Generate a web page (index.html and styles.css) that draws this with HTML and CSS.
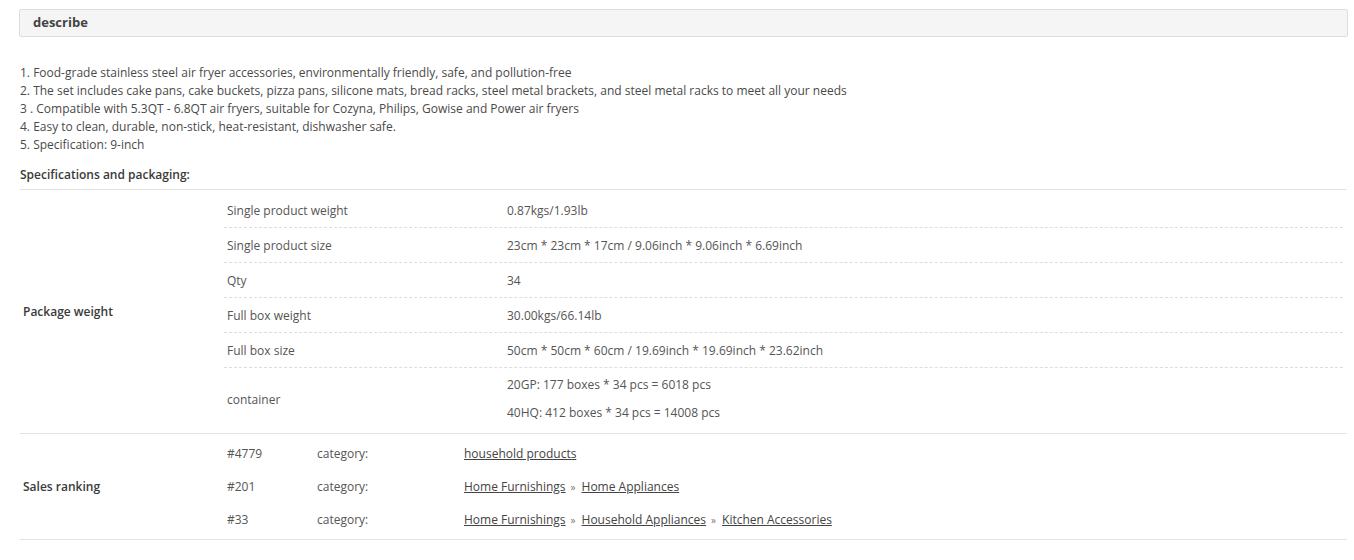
FILE: index.html
```html
<!DOCTYPE html>
<html lang="en">

<head>
    <meta charset="UTF-8">
    <meta name="viewport" content="width=device-width, initial-scale=1.0">
    <title>describe</title>
    <link rel="stylesheet" href="styles.css">
</head>

<body>
    <div class="page">
        <div class="tab-title">describe</div>

        <div class="desc">
            <p>1. Food-grade stainless steel air fryer accessories, environmentally friendly, safe, and pollution-free</p>
            <p>2. The set includes cake pans, cake buckets, pizza pans, silicone mats, bread racks, steel metal brackets, and steel metal racks to meet all your needs</p>
            <p>3 . Compatible with 5.3QT - 6.8QT air fryers, suitable for Cozyna, Philips, Gowise and Power air fryers</p>
            <p>4. Easy to clean, durable, non-stick, heat-resistant, dishwasher safe.</p>
            <p>5. Specification: 9-inch</p>
        </div>

        <div class="spec-title">Specifications and packaging:</div>

        <div class="group package">
            <div class="group-label">Package weight</div>
            <div class="group-body">
                <div class="row">
                    <div class="key">Single product weight</div>
                    <div class="val">0.87kgs/1.93lb</div>
                </div>
                <div class="row">
                    <div class="key">Single product size</div>
                    <div class="val">23cm * 23cm * 17cm / 9.06inch * 9.06inch * 6.69inch</div>
                </div>
                <div class="row">
                    <div class="key">Qty</div>
                    <div class="val">34</div>
                </div>
                <div class="row">
                    <div class="key">Full box weight</div>
                    <div class="val">30.00kgs/66.14lb</div>
                </div>
                <div class="row">
                    <div class="key">Full box size</div>
                    <div class="val">50cm * 50cm * 60cm / 19.69inch * 19.69inch * 23.62inch</div>
                </div>
                <div class="row tall">
                    <div class="key">container</div>
                    <div class="val">
                        <p>20GP: 177 boxes * 34 pcs = 6018 pcs</p>
                        <p>40HQ: 412 boxes * 34 pcs = 14008 pcs</p>
                    </div>
                </div>
            </div>
        </div>

        <div class="group ranking">
            <div class="group-label">Sales ranking</div>
            <div class="group-body">
                <div class="rank">
                    <span class="num">#4779</span>
                    <span class="cat">category:</span>
                    <span class="path"><a href="#">household products</a></span>
                </div>
                <div class="rank">
                    <span class="num">#201</span>
                    <span class="cat">category:</span>
                    <span class="path"><a href="#">Home Furnishings</a><i>»</i><a href="#">Home Appliances</a></span>
                </div>
                <div class="rank">
                    <span class="num">#33</span>
                    <span class="cat">category:</span>
                    <span class="path"><a href="#">Home Furnishings</a><i>»</i><a href="#">Household Appliances</a><i>»</i><a href="#">Kitchen Accessories</a></span>
                </div>
            </div>
        </div>
    </div>
</body>

</html>
```
FILE: styles.css
```css
body {
    margin: 0;
    background-color: #fff;
    font-family: "Open Sans", Arial, sans-serif;
    font-size: 12px;
    color: #444;
}

p {
    margin: 0;
}

.page {
    margin: 9px 6px 0 19px;
}

.tab-title {
    height: 26px;
    line-height: 24px;
    padding-left: 13px;
    background-color: #f5f5f5;
    border: 1px solid #ddd;
    border-radius: 2px;
    font-size: 13px;
    font-weight: bold;
    color: #444;
}

.desc {
    margin-top: 27px;
    padding-left: 1px;
    line-height: 18px;
    color: #4a4a4a;
}

.spec-title {
    margin: 12px 1px 0 1px;
    padding-bottom: 5px;
    line-height: 18px;
    font-weight: 600;
    color: #3a3a3a;
    border-bottom: 1px solid #e3e3e3;
}

.group {
    display: grid;
    grid-template-columns: 204px 1fr;
    margin: 0 1px 0 1px;
    border-bottom: 1px solid #e3e3e3;
}

.group-label {
    display: flex;
    align-items: center;
    padding-left: 3px;
    font-weight: 600;
    color: #3a3a3a;
}

.group-body {
    margin-right: 4px;
}

.package .group-body {
    padding-top: 3px;
}

.row {
    display: grid;
    grid-template-columns: 280px 1fr;
    align-items: center;
    height: 34px;
    padding-left: 3px;
    border-bottom: 1px dashed #ddd;
    color: #555;
}

.row.tall {
    height: 65px;
    border-bottom: none;
}

.row.tall .key,
.row.tall .val {
    margin-bottom: 3px;
}

.row.tall .val {
    line-height: 28px;
}

.ranking .group-body {
    padding: 3px 0 3px;
}

.rank {
    display: flex;
    align-items: center;
    height: 33px;
    padding-left: 3px;
    color: #555;
}

.num {
    width: 90px;
}

.cat {
    width: 147px;
}

.path a {
    color: #444;
    text-decoration: underline;
}

.path i {
    font-style: normal;
    font-size: 10px;
    color: #777;
    padding: 0 6px 0 5px;
}
```
